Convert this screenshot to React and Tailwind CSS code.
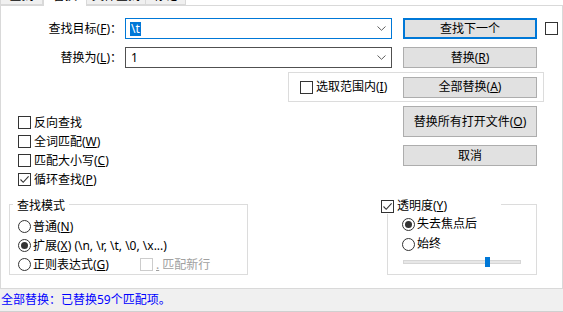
import React from "react";

function Box({ checked, disabled }) {
  return (
    <span
      className={`w-[13px] h-[13px] shrink-0 border bg-white flex items-center justify-center ${
        disabled ? "border-[#cccccc]" : "border-[#333333]"
      }`}
    >
      {checked && (
        <svg width="11" height="11" viewBox="0 0 11 11">
          <path d="M1.5 5.5 L4.2 8.3 L9.6 2.4" fill="none" stroke="#333333" strokeWidth="1.1" />
        </svg>
      )}
    </span>
  );
}

function Radio({ checked }) {
  return (
    <span className="w-[13px] h-[13px] shrink-0 rounded-full border border-[#333333] bg-white flex items-center justify-center">
      {checked && <span className="w-[7px] h-[7px] rounded-full bg-[#333333]" />}
    </span>
  );
}

function Btn({ children, def, className = "" }) {
  return (
    <div
      className={`w-[134px] shrink-0 flex items-center justify-center bg-[#e1e1e1] ${
        def ? "border-2 border-[#0078d7]" : "border border-[#adadad]"
      } ${className}`}
    >
      {children}
    </div>
  );
}

function Combo({ children, className = "" }) {
  return (
    <div className={`w-[267px] h-[21px] shrink-0 border bg-white flex items-center pl-[4px] pr-[5px] ${className}`}>
      <div className="flex-1 flex items-center">{children}</div>
      <svg width="9" height="5" viewBox="0 0 9 5">
        <path d="M0.5 0.5 L4.5 4.3 L8.5 0.5" fill="none" stroke="#606060" strokeWidth="1" />
      </svg>
    </div>
  );
}

function Check({ checked, children }) {
  return (
    <div className="h-[19px] flex items-center gap-[3px]">
      <Box checked={checked} />
      <span>{children}</span>
    </div>
  );
}

export default function App() {
  return (
    <div className="w-[563px] h-[312px] overflow-hidden flex flex-col bg-white text-[12px] leading-[16px] text-black font-['Noto_Sans','Noto_Sans_CJK_SC',sans-serif]">
      {/* Tabs, cut at the top */}
      <div className="h-[20px] -mt-[15px] flex items-end shrink-0">
        <div className="w-[43px] h-[18px] pb-[1px] bg-[#f0f0f0] border border-[#d9d9d9] flex items-center justify-center">查找</div>
        <div className="w-[44px] h-[20px] pb-[1px] bg-white border border-b-0 border-[#d9d9d9] relative z-10 -mb-px flex items-center justify-center">替换</div>
        <div className="w-[59px] h-[18px] pb-[1px] bg-[#f0f0f0] border border-l-0 border-[#d9d9d9] flex items-center justify-center">文件查找</div>
        <div className="w-[40px] h-[18px] pb-[1px] bg-[#f0f0f0] border border-l-0 border-[#d9d9d9] flex items-center justify-center">标记</div>
      </div>

      {/* Panel */}
      <div className="flex-1 flex flex-col border border-[#d9d9d9] bg-white">
        <div className="mt-[12px] h-[21px] flex items-center">
          <div className="w-[121px] text-right">
            查找目标(<u>F</u>)：
          </div>
          <Combo className="ml-[3px] border-[#0078d7]">
            <span className="bg-[#0078d7] text-white px-[1px] leading-[14px]">\t</span>
          </Combo>
          <Btn def className="ml-[11px] h-[21px]">查找下一个</Btn>
          <span className="ml-[8px]">
            <Box />
          </span>
        </div>

        <div className="mt-[8px] h-[21px] flex items-center">
          <div className="w-[121px] text-right">
            替换为(<u>L</u>)：
          </div>
          <Combo className="ml-[3px] border-[#505050]">
            <span className="px-[1px]">1</span>
          </Combo>
          <Btn className="ml-[11px] h-[21px]">
            <span>
              替换(<u>R</u>)
            </span>
          </Btn>
        </div>

        <div className="mt-[4px] ml-[287px] w-[256px] h-[30px] border border-[#dcdcdc] flex items-center">
          <div className="w-[103px] ml-[11px] flex items-center gap-[3px]">
            <Box />
            <span>
              选取范围内(<u>I</u>)
            </span>
          </div>
          <Btn className="h-[21px]">
            <span>
              全部替换(<u>A</u>)
            </span>
          </Btn>
        </div>

        <div className="flex">
          <div className="w-[402px] pl-[17px] pt-[11px] flex flex-col">
            <Check>反向查找</Check>
            <Check>
              全词匹配(<u>W</u>)
            </Check>
            <Check>
              匹配大小写(<u>C</u>)
            </Check>
            <Check checked>
              循环查找(<u>P</u>)
            </Check>
          </div>
          <div className="pt-[4px] flex flex-col">
            <Btn className="h-[31px]">
              <span>
                替换所有打开文件(<u>O</u>)
              </span>
            </Btn>
            <Btn className="mt-[8px] h-[21px]">取消</Btn>
          </div>
        </div>

        <div className="mt-[15px] flex items-start">
          {/* Search mode */}
          <div className="ml-[8px] w-[239px] h-[71px] border border-[#dcdcdc] flex flex-col">
            <div className="-mt-[7px] ml-[3px] self-start bg-white px-[4px] h-[16px]">查找模式</div>
            <div className="mt-[3px] pl-[8px] flex flex-col">
              <div className="h-[19px] flex items-center gap-[2px]">
                <Radio />
                <span>
                  普通(<u>N</u>)
                </span>
              </div>
              <div className="h-[19px] flex items-center gap-[2px]">
                <Radio checked />
                <span>
                  扩展(<u>X</u>) (\n, \r, \t, \0, \x...)
                </span>
              </div>
              <div className="h-[19px] flex items-center">
                <div className="w-[122px] flex items-center gap-[2px]">
                  <Radio />
                  <span>
                    正则表达式(<u>G</u>)
                  </span>
                </div>
                <Box disabled />
                <span className="ml-[3px] text-[#a0a0a0]">
                  <u>.</u> 匹配新行
                </span>
              </div>
            </div>
          </div>

          {/* Transparency */}
          <div className="ml-[139px] w-[150px] h-[71px] border border-[#dcdcdc] flex flex-col">
            <div className="-mt-[7px] -ml-[7px] w-[120px] h-[16px] bg-white flex items-center gap-[3px]">
              <Box checked />
              <span>
                透明度(<u>Y</u>)
              </span>
            </div>
            <div className="pl-[14px] flex flex-col">
              <div className="h-[20px] flex items-center gap-[2px]">
                <Radio checked />
                <span>失去焦点后</span>
              </div>
              <div className="h-[20px] flex items-center gap-[2px]">
                <Radio />
                <span>始终</span>
              </div>
            </div>
            <div className="mt-[6px] ml-[15px] w-[118px] h-[4px] bg-[#e7e7e7] border border-[#d6d6d6] relative">
              <div className="absolute left-[81px] -top-[4px] w-[5px] h-[10px] bg-[#0078d7]" />
            </div>
          </div>
        </div>
      </div>

      {/* Status bar */}
      <div className="h-[23px] shrink-0 bg-[#f0f0f0] border-b border-[#d0d0d0] flex items-center pl-[1px] text-[#0000ff]">
        全部替换：已替换59个匹配项。
      </div>
    </div>
  );
}
